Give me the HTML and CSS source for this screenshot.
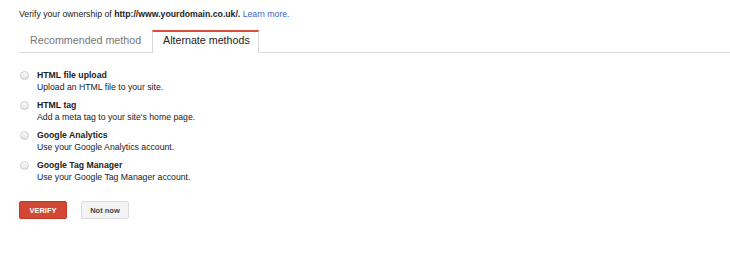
FILE: index.html
```html
<!DOCTYPE html>
<html lang="en">
<head>
    <meta charset="UTF-8">
    <title>Verify ownership</title>
    <link rel="stylesheet" href="styles.css">
</head>
<body>
    <div class="verify-container">
        <p class="intro">Verify your ownership of <b>http://www.yourdomain.co.uk/.</b> <a href="#">Learn more.</a></p>

        <div class="tabs">
            <div class="tab">Recommended method</div>
            <div class="tab active">Alternate methods</div>
        </div>

        <div class="methods">
            <label class="method">
                <span class="radio"></span>
                <span class="method-text">
                    <span class="method-title">HTML file upload</span>
                    <span class="method-desc">Upload an HTML file to your site.</span>
                </span>
            </label>
            <label class="method">
                <span class="radio"></span>
                <span class="method-text">
                    <span class="method-title">HTML tag</span>
                    <span class="method-desc">Add a meta tag to your site's home page.</span>
                </span>
            </label>
            <label class="method">
                <span class="radio"></span>
                <span class="method-text">
                    <span class="method-title">Google Analytics</span>
                    <span class="method-desc">Use your Google Analytics account.</span>
                </span>
            </label>
            <label class="method">
                <span class="radio"></span>
                <span class="method-text">
                    <span class="method-title">Google Tag Manager</span>
                    <span class="method-desc">Use your Google Tag Manager account.</span>
                </span>
            </label>
        </div>

        <div class="actions">
            <button type="button" class="verify-btn">VERIFY</button>
            <button type="button" class="later-btn">Not now</button>
        </div>
    </div>
</body>
</html>
```

FILE: styles.css
```css
body {
    margin: 0;
    padding: 0;
    font-family: Arial, "Liberation Sans", sans-serif;
    font-size: 8.7px;
    color: #222;
    background: white;
}

.verify-container {
    padding: 8px 0 0 19px;
}

.intro {
    margin: 0;
    line-height: 12px;
}

.intro a {
    color: #3d63c6;
    text-decoration: none;
}

.tabs {
    display: flex;
    align-items: flex-end;
    gap: 2px;
    margin-top: 10px;
    height: 22px;
    border-bottom: 1px solid #d9d9d9;
}

.tab {
    box-sizing: border-box;
    width: 131px;
    height: 23px;
    margin-bottom: -1px;
    padding: 0 0 4px 10px;
    font-size: 10.7px;
    line-height: 17px;
    color: #777;
    border: 1px solid transparent;
    border-top: 2px solid transparent;
    border-bottom: none;
}

.tab.active {
    width: 107px;
    color: #222;
    background: white;
    border-color: #d9d9d9;
    border-top-color: #dd4b39;
}

.methods {
    margin-top: 16px;
    display: flex;
    flex-direction: column;
    gap: 6px;
}

.method {
    display: flex;
    gap: 8px;
}

.radio {
    width: 7px;
    height: 7px;
    margin: 2px 0 0 1px;
    border-radius: 50%;
    border: 1px solid #cdcdcd;
    background: linear-gradient(#fbfbfb, #e4e4e4);
    flex-shrink: 0;
}

.method-text {
    display: flex;
    flex-direction: column;
    line-height: 12px;
}

.method-title {
    font-weight: bold;
}

.actions {
    margin-top: 18px;
    display: flex;
    gap: 14px;
}

.verify-btn,
.later-btn {
    font-family: Arial, "Liberation Sans", sans-serif;
    font-size: 7.5px;
    font-weight: bold;
    height: 18px;
    width: 48px;
    padding: 0;
    border-radius: 2px;
    cursor: pointer;
}

.verify-btn {
    background: #d14836;
    border: 1px solid #c53727;
    color: white;
}

.later-btn {
    background: #f3f3f3;
    border: 1px solid #dcdcdc;
    color: #444;
}
```
